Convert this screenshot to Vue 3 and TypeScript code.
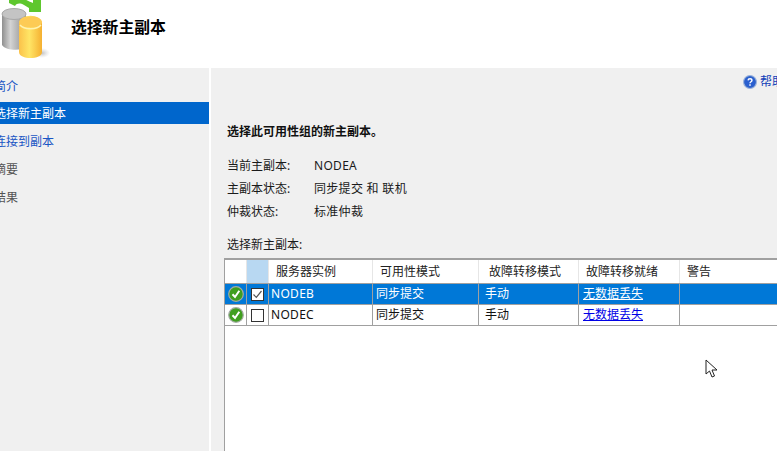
<script setup lang="ts">
interface Row { name: string; selected: boolean }
const navItems = [
  { label: '简介', kind: 'link' },
  { label: '选择新主副本', kind: 'active' },
  { label: '连接到副本', kind: 'link' },
  { label: '摘要', kind: 'muted' },
  { label: '结果', kind: 'muted' },
]
const info = [
  ['当前主副本:', 'NODEA'],
  ['主副本状态:', '同步提交 和 联机'],
  ['仲裁状态:', '标准仲裁'],
]
const headers = ['服务器实例', '可用性模式', '故障转移模式', '故障转移就绪', '警告']
const rows: Row[] = [
  { name: 'NODEB', selected: true },
  { name: 'NODEC', selected: false },
]
</script>

<template>
  <div class="page">
    <header class="top">
      <svg class="logo" width="52" height="60" viewBox="0 0 52 60">
        <defs>
          <linearGradient id="gray" x1="0" x2="1" y1="0" y2="0">
            <stop offset="0" stop-color="#8f8f8f" />
            <stop offset="0.35" stop-color="#d4d4d4" />
            <stop offset="1" stop-color="#8a8a8a" />
          </linearGradient>
          <linearGradient id="gold" x1="0" x2="1" y1="0" y2="0">
            <stop offset="0" stop-color="#fbc24a" />
            <stop offset="0.45" stop-color="#ffe566" />
            <stop offset="1" stop-color="#f5b031" />
          </linearGradient>
          <radialGradient id="shadow">
            <stop offset="0" stop-color="#999" stop-opacity="0.6" />
            <stop offset="1" stop-color="#bbb" stop-opacity="0" />
          </radialGradient>
        </defs>
        <path d="M9 0 L9 3 L15 6 C17 3 20 3 24 5 L29 8 L29 12 L41 12 L41 0 L33 0 L33 3 C28 1 27 0 26 0 Z" fill="#5ec72e" />
        <ellipse cx="42" cy="53" rx="8" ry="5" fill="url(#shadow)" />
        <path d="M2 15 C2 7 26 7 26 15 L26 47 C22 51 6 51 2 45 Z" fill="url(#gray)" />
        <ellipse cx="14" cy="14" rx="12" ry="5.500" fill="#c4c4c4" stroke="#a8a8a8" />
        <path d="M19 24 C19 13 42 13 42 24 L42 52 C42 60 19 60 19 52 Z" fill="url(#gold)" />
        <ellipse cx="30.500" cy="22" rx="11.500" ry="5.500" fill="#fdcb55" />
        <path d="M20 25 C24 30 37 30 41 25" fill="none" stroke="#fff3b0" stroke-width="1.500" />
      </svg>
      <h1 class="title">选择新主副本</h1>
    </header>
    <div class="body">
      <nav class="nav">
        <div v-for="item in navItems" :key="item.label" class="nav-item" :class="item.kind">
          <span class="nav-text">{{ item.label }}</span>
        </div>
      </nav>
      <main class="content">
        <div class="help">
          <svg width="14" height="14" viewBox="0 0 13 13">
            <circle cx="6.500" cy="6.500" r="6" fill="#2f63c8" stroke="#9db4dd" />
            <circle cx="6.500" cy="6.500" r="4.500" fill="#2a5fd0" />
            <path d="M4.700 5 C4.800 3 8.300 3 8.300 5 C8.300 6.300 6.500 6.200 6.500 7.700" fill="none" stroke="#fff" stroke-width="1.300" />
            <rect x="5.800" y="8.600" width="1.400" height="1.400" fill="#fff" />
          </svg>
          <span class="help-text">帮助</span>
        </div>
        <p class="lead">选择此可用性组的新主副本。</p>
        <dl class="info">
          <div v-for="pair in info" :key="pair[0]" class="info-row">
            <dt>{{ pair[0] }}</dt>
            <dd>{{ pair[1] }}</dd>
          </div>
        </dl>
        <p class="table-label">选择新主副本:</p>
        <div class="table">
          <div class="tr head">
            <div class="th"></div>
            <div class="th th-check"></div>
            <div v-for="h in headers" :key="h" class="th th-text">{{ h }}</div>
          </div>
          <div v-for="row in rows" :key="row.name" class="tr data" :class="{ sel: row.selected }">
            <div class="td td-icon">
              <svg width="16" height="16" viewBox="0 0 16 16">
                <circle cx="8" cy="8" r="7.300" fill="#3f9e1f" stroke="#a5aca5" stroke-width="1.200" />
                <path d="M4.500 8.300 L7 11 L11.300 4.800" fill="none" stroke="#fff" stroke-width="2" />
              </svg>
            </div>
            <div class="td td-icon">
              <span class="check">
                <svg v-if="row.selected" width="11" height="11" viewBox="0 0 11 11">
                  <path d="M1.500 5.500 L4.300 8.300 L9.500 2" fill="none" stroke="#555" stroke-width="1.200" />
                </svg>
              </span>
            </div>
            <div class="td name">{{ row.name }}</div>
            <div class="td">同步提交</div>
            <div class="td mode">手动</div>
            <div class="td ready-cell"><a class="ready">无数据丢失</a></div>
            <div class="td"></div>
          </div>
        </div>
      </main>
    </div>
    <svg class="cursor" width="14" height="20" viewBox="0 0 14 20">
      <path d="M1 1 L1 15 L4.500 12 L7 18 L9.500 17 L7 11 L12 11 Z" fill="#fff" stroke="#222" stroke-width="1" />
    </svg>
  </div>
</template>

<style>
html, body { margin: 0; overflow: hidden; background: #fff; }
</style>

<style scoped>
.page {
  position: relative;
  width: 777px;
  height: 451px;
  overflow: hidden;
  display: flex;
  flex-direction: column;
  background: #fff;
  color: #1a1a1a;
  font: 12px/18px "Noto Sans", "Noto Sans CJK SC", sans-serif;
}
.top {
  height: 68px;
  flex: none;
  display: flex;
  align-items: flex-start;
  overflow: hidden;
}
.logo { margin: 0 19px 0 0; flex: none; }
.title {
  margin: 17px 0 0;
  font-size: 15.800px;
  line-height: 20px;
  font-weight: 700;
  color: #000;
  font-family: "Noto Sans CJK SC", sans-serif;
}
.body { flex: 1; display: flex; gap: 2px; min-height: 0; }
.nav {
  width: 209px;
  flex: none;
  background: #f0f0f0;
  padding-top: 4px;
  overflow: hidden;
}
.nav-item { height: 28px; display: flex; align-items: center; }
.nav-item.active { height: 22px; margin: 2px 0 3px; background: #0066cc; color: #fff; }
.nav-item.link { color: #1a55c4; }
.nav-item.muted { color: #555; }
.nav-text { margin-left: -6px; padding-top: 2px; white-space: nowrap; }
.content {
  flex: 1;
  min-width: 0;
  background: #f0f0f0;
  padding: 6px 0 0 16px;
  display: flex;
  flex-direction: column;
  overflow: hidden;
}
.help {
  align-self: flex-end;
  display: flex;
  align-items: center;
  gap: 3px;
  margin-right: -11px;
  height: 16px;
  width: 45px;
  flex: none;
  white-space: nowrap;
}
.help-text { color: #1040b8; }
.lead { margin: 33px 0 0; font-weight: 700; color: #111; height: 18px; }
.info { margin: 13px 0 0; }
.info-row { display: flex; height: 23px; align-items: center; }
.info-row dt { width: 87px; flex: none; }
.info-row dd { margin: 0; white-space: pre; letter-spacing: 0.3px; }
.table-label { margin: 13px 0 0; height: 18px; }
.table {
  margin: 4px 0 0 -3px;
  width: 560px;
  flex: 1;
  box-sizing: border-box;
  border: 1px solid #a0a0a0;
  border-right: 0;
  border-bottom: 0;
  border-top-width: 2px;
  background: #fff;
  color: #111;
}
.tr {
  display: grid;
  grid-template-columns: 22px 22px 104px 106px 100px 101px 1fr;
}
.head { height: 23px; border-bottom: 1px solid #a0a0a0; box-sizing: content-box; }
.th { border-right: 1px solid #e6e6e6; display: flex; align-items: center; }
.th-check { background: #b8d8f2; }
.th-text { padding-left: 7px; color: #222; white-space: nowrap; }
.th-text:nth-child(5) { padding-left: 10px; }
.data { height: 20px; border-bottom: 1px solid #a0a0a0; }
.td {
  border-right: 1px solid #a0a0a0;
  display: flex;
  align-items: center;
  padding-left: 3px;
  white-space: nowrap;
  overflow: hidden;
}
.td.td-icon { padding: 0; justify-content: center; }
.td.name { letter-spacing: 0.3px; padding-left: 2px; }
.td.mode { padding-left: 6px; }
.td.ready-cell { padding-left: 4px; }
.sel { background: #0078d7; color: #fff; }
.check {
  width: 11px;
  height: 11px;
  border: 1px solid #333;
  background: #fff;
  display: block;
}
.check svg { display: block; }
.ready { color: #0000e6; text-decoration: underline; }
.sel .ready { color: #fff; }
.cursor { position: absolute; left: 705px; top: 359px; }
</style>
